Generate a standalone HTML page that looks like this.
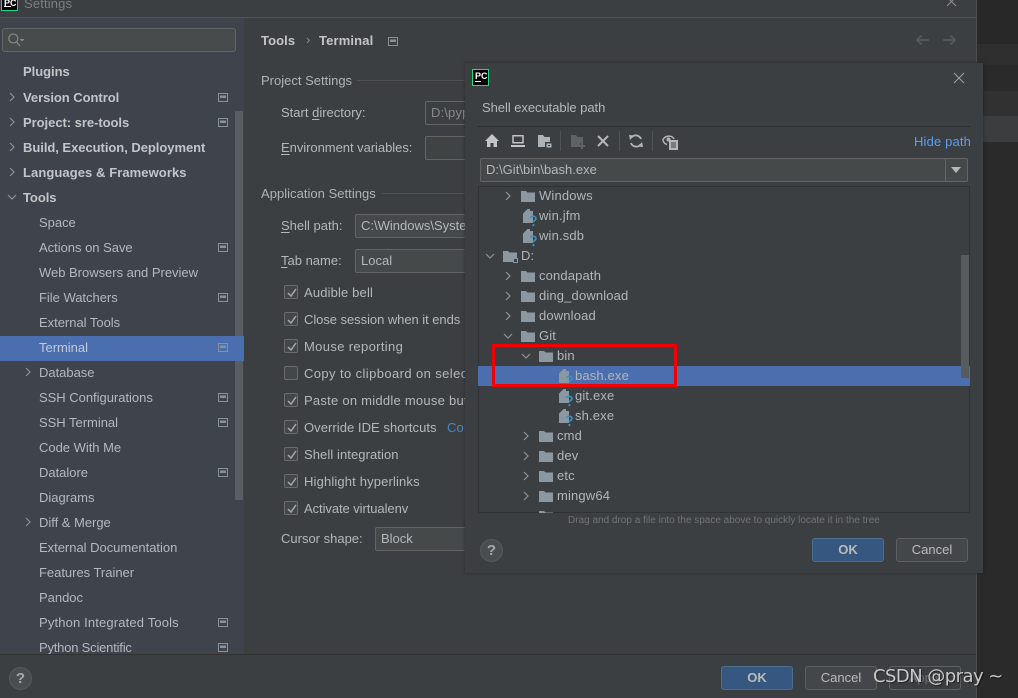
<!DOCTYPE html>
<html><head><meta charset="utf-8"><style>
html,body{margin:0;padding:0;background:#2b2b2b}
body{width:1018px;height:698px;overflow:hidden;position:relative;font-family:"Liberation Sans","Noto Sans CJK SC",sans-serif;font-size:13px;color:#bbbbbb}
div,span.t,svg{position:absolute}
.t{position:absolute;white-space:nowrap;line-height:20px;height:20px;letter-spacing:.15px}
.b{font-weight:bold;color:#c3c5c7;letter-spacing:-.04px}
.s{color:#b5b9bd;letter-spacing:-.02px}
.c{color:#b5b8ba;letter-spacing:0}
u{text-underline-offset:2px}
.inp{background:#45494a;border:1px solid #646464;box-sizing:border-box;border-radius:2px}
.btn{box-sizing:border-box;border:1px solid #5e6060;background:#444749;border-radius:3px;text-align:center;line-height:22px;color:#bbb}
.ok{background:#365880;border-color:#4c708c;color:#bbbbbb;font-weight:bold}
.cb{width:14px;height:14px;box-sizing:border-box;background:#43474a;border:1px solid #6b6b6b;border-radius:2px}
.cb svg{left:1px;top:1px}
.sep{height:1px;background:#515151}
.tn{color:#b3b6b9}
</style></head><body>
<svg width="0" height="0" style="position:absolute"><defs>
<symbol id="gb" viewBox="0 0 10 9"><path d="M.5.5h9v8h-9z" fill="none" stroke="#8a9299"/><path d="M2 2.500h6v2.500H2z" fill="#8a9299"/></symbol>
<symbol id="ar" viewBox="0 0 10 10"><path d="M3 1l4 4-4 4" fill="none" stroke="#8f9294" stroke-width="1.200"/></symbol>
<symbol id="ad" viewBox="0 0 10 10"><path d="M1 3l4 4 4-4" fill="none" stroke="#8f9294" stroke-width="1.200"/></symbol>
<symbol id="fo" viewBox="0 0 14 12"><path d="M0 1h5l1.500 1.500H14V12H0z" fill="#8b98a2"/></symbol>
<symbol id="fi" viewBox="0 0 14 18"><path d="M4.500 0H7v2h3v12H0V4.500z" fill="#8b98a2"/><path d="M7.400 9c.3-2.300 5.600-2.300 5.600.5 0 2-2.600 1.700-2.600 3.800" fill="none" stroke="#3592c4" stroke-width="1.700"/><rect x="9.500" y="15" width="1.800" height="2.200" fill="#3592c4"/></symbol>
</defs></svg>

<!-- right background bands -->
<div style="left:977px;top:0;width:41px;height:44px;background:#282828"></div>
<div style="left:977px;top:44px;width:41px;height:21px;background:#2f2f2f"></div>
<div style="left:977px;top:65px;width:41px;height:26px;background:#2a2a2a"></div>
<div style="left:977px;top:91px;width:41px;height:25px;background:#313131"></div>
<div style="left:977px;top:116px;width:41px;height:26px;background:#3b3d3f"></div>
<div style="left:977px;top:142px;width:41px;height:556px;background:#2a2a2a"></div>

<!-- settings window -->
<div style="left:0;top:0;width:977px;height:698px;background:#3c3f41;border-right:1px solid #4a4c4e;box-sizing:border-box"></div>
<div style="left:0;top:17px;width:976px;height:1px;background:#515355"></div>
<div style="left:1px;top:-6px;width:15px;height:15px;background:#000;border:1px solid #21d789"></div>
<span class="t" style="left:4px;top:-7px;color:#fff;font-weight:bold;font-size:9px;letter-spacing:0">PC</span>
<div style="left:4px;top:6px;width:7px;height:1px;background:#fff"></div>
<span class="t" style="left:24px;top:-6px;color:#7b7e80;font-size:13px">Settings</span>
<svg style="left:946px;top:-4px" width="12" height="12"><path d="M1 1l9 9M10 1l-9 9" stroke="#8f8f8f"/></svg>

<!-- sidebar -->
<div style="left:0;top:18px;width:244px;height:636px;background:#3e434c"></div>
<div class="inp" style="left:2px;top:28px;width:234px;height:24px;background:#474b4c;border-color:#606467;border-radius:3px"></div>
<svg style="left:8px;top:33px" width="20" height="14"><circle cx="5.300" cy="5.500" r="4.500" fill="none" stroke="#8b8e90" stroke-width="1.100"/><path d="M8.500 9l3.500 4" stroke="#8b8e90" stroke-width="1.200"/><path d="M11.500 6h5l-2.500 2.500z" fill="#8b8e90"/></svg>
<div style="left:235px;top:111px;width:8px;height:389px;background:#5a5d63"></div>
<div style="left:0;top:336px;width:244px;height:25px;background:#4b6eaf"></div>

<span class="t b" style="left:23px;top:62px">Plugins</span>
<span class="t b" style="left:23px;top:88px">Version Control</span>
<span class="t b" style="left:23px;top:113px">Project: sre-tools</span>
<span class="t b" style="left:23px;top:138px">Build, Execution, Deployment</span>
<span class="t b" style="left:23px;top:163px;letter-spacing:.08px">Languages &amp; Frameworks</span>
<span class="t b" style="left:23px;top:188px">Tools</span>
<span class="t s" style="left:39px;top:213px">Space</span>
<span class="t s" style="left:39px;top:238px">Actions on Save</span>
<span class="t s" style="left:39px;top:263px">Web Browsers and Preview</span>
<span class="t s" style="left:39px;top:288px">File Watchers</span>
<span class="t s" style="left:39px;top:313px">External Tools</span>
<span class="t s" style="left:39px;top:338px;color:#c4cad6">Terminal</span>
<span class="t s" style="left:39px;top:363px">Database</span>
<span class="t s" style="left:39px;top:388px">SSH Configurations</span>
<span class="t s" style="left:39px;top:413px">SSH Terminal</span>
<span class="t s" style="left:39px;top:438px">Code With Me</span>
<span class="t s" style="left:39px;top:463px">Datalore</span>
<span class="t s" style="left:39px;top:488px">Diagrams</span>
<span class="t s" style="left:39px;top:513px">Diff &amp; Merge</span>
<span class="t s" style="left:39px;top:538px">External Documentation</span>
<span class="t s" style="left:39px;top:563px">Features Trainer</span>
<span class="t s" style="left:39px;top:588px">Pandoc</span>
<span class="t s" style="left:39px;top:613px;letter-spacing:.15px">Python Integrated Tools</span>
<span class="t s" style="left:39px;top:638px;letter-spacing:-.2px">Python Scientific</span>

<svg style="left:7px;top:92px" width="10" height="10"><use href="#ar"/></svg>
<svg style="left:7px;top:117px" width="10" height="10"><use href="#ar"/></svg>
<svg style="left:7px;top:142px" width="10" height="10"><use href="#ar"/></svg>
<svg style="left:7px;top:167px" width="10" height="10"><use href="#ar"/></svg>
<svg style="left:7px;top:192px" width="10" height="10"><use href="#ad"/></svg>
<svg style="left:23px;top:367px" width="10" height="10"><use href="#ar"/></svg>
<svg style="left:23px;top:517px" width="10" height="10"><use href="#ar"/></svg>

<svg style="left:218px;top:93px" width="10" height="9"><use href="#gb"/></svg>
<svg style="left:218px;top:118px" width="10" height="9"><use href="#gb"/></svg>
<svg style="left:218px;top:243px" width="10" height="9"><use href="#gb"/></svg>
<svg style="left:218px;top:293px" width="10" height="9"><use href="#gb"/></svg>
<svg style="left:218px;top:343px" width="10" height="9"><use href="#gb"/></svg>
<svg style="left:218px;top:393px" width="10" height="9"><use href="#gb"/></svg>
<svg style="left:218px;top:418px" width="10" height="9"><use href="#gb"/></svg>
<svg style="left:218px;top:468px" width="10" height="9"><use href="#gb"/></svg>
<svg style="left:218px;top:618px" width="10" height="9"><use href="#gb"/></svg>
<svg style="left:218px;top:643px" width="10" height="9"><use href="#gb"/></svg>

<!-- content -->
<span class="t b" style="left:261px;top:31px;letter-spacing:.1px">Tools</span>
<span class="t" style="left:306px;top:30px;color:#8a8d8f">›</span>
<span class="t b" style="left:319px;top:31px;letter-spacing:.15px">Terminal</span>
<svg style="left:388px;top:37px" width="10" height="9"><use href="#gb"/></svg>
<svg style="left:915px;top:34px" width="15" height="12"><path d="M14 6H2M6.500 1.500L2 6l4.500 4.500" fill="none" stroke="#5a5d5f" stroke-width="1.500"/></svg>
<svg style="left:942px;top:34px" width="15" height="12"><path d="M1 6h12M8.500 1.500L13 6l-4.500 4.500" fill="none" stroke="#5a5d5f" stroke-width="1.500"/></svg>

<span class="t c" style="left:261px;top:71px;color:#b0b3b5">Project Settings</span>
<div class="sep" style="left:357px;top:80px;width:108px"></div>
<span class="t c" style="left:281px;top:103px">Start <u>d</u>irectory:</span>
<div class="inp" style="left:425px;top:101px;width:60px;height:24px;background:#3c3f41"></div>
<span class="t" style="left:431px;top:103px;color:#868a8c">D:\pyp</span>
<span class="t c" style="left:281px;top:138px;letter-spacing:-.04px"><u>E</u>nvironment variables:</span>
<div class="inp" style="left:425px;top:136px;width:60px;height:24px;background:#3f4344"></div>
<span class="t c" style="left:261px;top:184px;color:#b0b3b5;letter-spacing:.03px">Application Settings</span>
<div class="sep" style="left:382px;top:193px;width:83px"></div>
<span class="t c" style="left:281px;top:216px"><u>S</u>hell path:</span>
<div class="inp" style="left:355px;top:214px;width:130px;height:24px"></div>
<span class="t c" style="left:361px;top:216px;width:104px;overflow:hidden">C:\Windows\Syste</span>
<span class="t c" style="left:281px;top:251px"><u>T</u>ab name:</span>
<div class="inp" style="left:355px;top:249px;width:130px;height:24px"></div>
<span class="t c" style="left:361px;top:251px">Local</span>

<div class="cb" style="left:284px;top:285px"><svg width="12" height="12"><path d="M2 6l3 3 5-7" fill="none" stroke="#a5a8aa" stroke-width="1.500"/></svg></div>
<span class="t" style="left:304px;top:283px;color:#b5b8ba">Audible bell</span>
<div class="cb" style="left:284px;top:312px"><svg width="12" height="12"><path d="M2 6l3 3 5-7" fill="none" stroke="#a5a8aa" stroke-width="1.500"/></svg></div>
<span class="t c" style="left:304px;top:310px;letter-spacing:-.05px">Close session when it ends</span>
<div class="cb" style="left:284px;top:339px"><svg width="12" height="12"><path d="M2 6l3 3 5-7" fill="none" stroke="#a5a8aa" stroke-width="1.500"/></svg></div>
<span class="t c" style="left:304px;top:337px;letter-spacing:.35px">Mouse reporting</span>
<div class="cb" style="left:284px;top:366px"></div>
<span class="t c" style="left:304px;top:364px;width:161px;overflow:hidden;letter-spacing:.4px">Copy to clipboard on selection</span>
<div class="cb" style="left:284px;top:393px"><svg width="12" height="12"><path d="M2 6l3 3 5-7" fill="none" stroke="#a5a8aa" stroke-width="1.500"/></svg></div>
<span class="t c" style="left:304px;top:391px;width:161px;overflow:hidden;letter-spacing:.25px">Paste on middle mouse button</span>
<div class="cb" style="left:284px;top:420px"><svg width="12" height="12"><path d="M2 6l3 3 5-7" fill="none" stroke="#a5a8aa" stroke-width="1.500"/></svg></div>
<span class="t c" style="left:304px;top:418px;letter-spacing:.05px">Override IDE shortcuts</span>
<span class="t" style="left:447px;top:418px;color:#4a88c7;width:18px;overflow:hidden">Configure</span>
<div class="cb" style="left:284px;top:447px"><svg width="12" height="12"><path d="M2 6l3 3 5-7" fill="none" stroke="#a5a8aa" stroke-width="1.500"/></svg></div>
<span class="t c" style="left:304px;top:445px;letter-spacing:.08px">Shell integration</span>
<div class="cb" style="left:284px;top:474px"><svg width="12" height="12"><path d="M2 6l3 3 5-7" fill="none" stroke="#a5a8aa" stroke-width="1.500"/></svg></div>
<span class="t" style="left:304px;top:472px;color:#b5b8ba">Highlight hyperlinks</span>
<div class="cb" style="left:284px;top:501px"><svg width="12" height="12"><path d="M2 6l3 3 5-7" fill="none" stroke="#a5a8aa" stroke-width="1.500"/></svg></div>
<span class="t c" style="left:304px;top:499px;letter-spacing:-.07px">Activate virtualenv</span>
<span class="t c" style="left:281px;top:529px;letter-spacing:0">Cursor shape:</span>
<div class="inp" style="left:375px;top:527px;width:110px;height:24px"></div>
<span class="t c" style="left:381px;top:529px">Block</span>

<!-- footer -->
<div style="left:0;top:654px;width:976px;height:1px;background:#323232"></div>
<div style="left:9px;top:667px;width:23px;height:23px;box-sizing:border-box;border-radius:50%;background:#4a4d4f;border:1px solid #56595b;text-align:center;line-height:21px;font-weight:bold;font-size:15px;color:#a5a8aa">?</div>
<div class="btn ok" style="left:721px;top:666px;width:72px;height:24px">OK</div>
<div class="btn" style="left:805px;top:666px;width:72px;height:24px">Cancel</div>
<div class="btn" style="left:889px;top:666px;width:72px;height:24px;background:#3c3f41;color:#6e7072">Apply</div>

<!-- dialog -->
<div style="left:465px;top:63px;width:518px;height:510px;background:#3c3f41;box-shadow:0 0 3px rgba(30,30,30,.7)"></div>
<div style="left:472px;top:69px;width:15px;height:15px;background:#000;border:1px solid #21d789"></div>
<span class="t" style="left:475px;top:66px;color:#fff;font-weight:bold;font-size:9px;letter-spacing:0">PC</span>
<div style="left:475px;top:81px;width:6px;height:1px;background:#fff"></div>
<svg style="left:953px;top:72px" width="12" height="12"><path d="M1 1l10 10M11 1L1 11" stroke="#a0a2a4"/></svg>
<span class="t c" style="left:482px;top:98px;letter-spacing:-.05px">Shell executable path</span>
<div style="left:477px;top:126px;width:494px;height:1px;background:#2e3032"></div>

<!-- toolbar -->
<svg style="left:485px;top:134px" width="14" height="13"><path d="M7 0L0 7h2v6h3.500V9h3v4H12V7h2z" fill="#c2c4c6"/></svg>
<svg style="left:511px;top:135px" width="14" height="12"><path d="M2 .8h10v7H2z" fill="none" stroke="#c2c4c6" stroke-width="1.500"/><path d="M0 10h14v2H0z" fill="#c2c4c6"/></svg>
<svg style="left:538px;top:135px" width="14" height="13"><path d="M0 0h5l1.500 2H12v5H7v5H0z" fill="#aeb3b7"/><path d="M8.500 8.500h5v4h-5z" fill="#aeb3b7"/><path d="M10 10h2v1h-2z" fill="#3c3f41"/></svg>
<div style="left:560px;top:131px;width:1px;height:20px;background:#515355"></div>
<svg style="left:571px;top:135px" width="16" height="14"><path d="M0 0h5l1.500 2H12v6H9v4H0z" fill="#606365"/><path d="M11 8v6M8 11h6" stroke="#606365" stroke-width="2"/></svg>
<svg style="left:597px;top:135px" width="12" height="12"><path d="M1 1l10 10M11 1L1 11" stroke="#b4b6b8" stroke-width="2"/></svg>
<div style="left:619px;top:131px;width:1px;height:20px;background:#515355"></div>
<svg style="left:629px;top:134px" width="14" height="14"><path d="M12 5A5.500 5.500 0 0 0 2.500 3.500M2 9a5.500 5.500 0 0 0 9.500 1.500" fill="none" stroke="#b4b6b8" stroke-width="1.800"/><path d="M0 1l5 .5L1 6zM14 13l-5-.5L13 8z" fill="#b4b6b8"/></svg>
<div style="left:652px;top:131px;width:1px;height:20px;background:#515355"></div>
<svg style="left:662px;top:134px" width="16" height="16"><path d="M.8 6C3 1 10 1 12 5" fill="none" stroke="#b4b6b8" stroke-width="1.500"/><path d="M.8 6C1.500 8 3 10 5 10.500" fill="none" stroke="#b4b6b8" stroke-width="1.500"/><circle cx="6.500" cy="5.500" r="2" fill="#b4b6b8"/><path d="M7 6h9v10H7z" fill="#b4b6b8"/><path d="M9 9h5M9 11h5M9 13h5" stroke="#3c3f41"/></svg>
<span class="t" style="left:914px;top:132px;color:#589df6">Hide path</span>

<!-- path field -->
<div class="inp" style="left:480px;top:158px;width:488px;height:24px;background:#45494a;border-color:#646464"></div>
<div style="left:945px;top:159px;width:1px;height:22px;background:#646464"></div>
<div style="left:951px;top:167px;width:0;height:0;border-left:5px solid transparent;border-right:5px solid transparent;border-top:6px solid #b4b6b8"></div>
<span class="t c" style="left:486px;top:160px;letter-spacing:.02px">D:\Git\bin\bash.exe</span>

<!-- tree -->
<div style="left:478px;top:186px;width:492px;height:327px;box-sizing:border-box;border:1px solid #303234;background:#3c3f41"></div>
<div style="left:478px;top:366px;width:492px;height:20px;background:#4b6eaf"></div>
<div style="left:961px;top:255px;width:8px;height:123px;background:#585b5d"></div>

<svg style="left:503px;top:191px" width="10" height="10"><use href="#ar"/></svg>
<svg style="left:521px;top:190px" width="14" height="12"><use href="#fo"/></svg>
<span class="t tn" style="left:539px;top:186px">Windows</span>
<svg style="left:523px;top:209px" width="14" height="18"><use href="#fi"/></svg>
<span class="t tn" style="left:539px;top:206px">win.jfm</span>
<svg style="left:523px;top:229px" width="14" height="18"><use href="#fi"/></svg>
<span class="t tn" style="left:539px;top:226px">win.sdb</span>

<svg style="left:485px;top:251px" width="10" height="10"><use href="#ad"/></svg>
<svg style="left:503px;top:250px" width="14" height="12"><use href="#fo"/></svg>
<div style="left:513px;top:258px;width:5px;height:5px;background:#3c3f41;border:1px solid #8b98a2;box-sizing:border-box"></div>
<span class="t tn" style="left:521px;top:246px">D:</span>

<svg style="left:503px;top:271px" width="10" height="10"><use href="#ar"/></svg>
<svg style="left:521px;top:270px" width="14" height="12"><use href="#fo"/></svg>
<span class="t tn" style="left:539px;top:266px">condapath</span>
<svg style="left:503px;top:291px" width="10" height="10"><use href="#ar"/></svg>
<svg style="left:521px;top:290px" width="14" height="12"><use href="#fo"/></svg>
<span class="t tn" style="left:539px;top:286px">ding_download</span>
<svg style="left:503px;top:311px" width="10" height="10"><use href="#ar"/></svg>
<svg style="left:521px;top:310px" width="14" height="12"><use href="#fo"/></svg>
<span class="t tn" style="left:539px;top:306px">download</span>
<svg style="left:503px;top:331px" width="10" height="10"><use href="#ad"/></svg>
<svg style="left:521px;top:330px" width="14" height="12"><use href="#fo"/></svg>
<span class="t tn" style="left:539px;top:326px">Git</span>
<svg style="left:521px;top:351px" width="10" height="10"><use href="#ad"/></svg>
<svg style="left:539px;top:350px" width="14" height="12"><use href="#fo"/></svg>
<span class="t tn" style="left:557px;top:346px">bin</span>
<svg style="left:559px;top:369px" width="14" height="18"><use href="#fi"/></svg>
<span class="t tn" style="left:575px;top:366px">bash.exe</span>
<svg style="left:559px;top:389px" width="14" height="18"><use href="#fi"/></svg>
<span class="t tn" style="left:575px;top:386px">git.exe</span>
<svg style="left:559px;top:409px" width="14" height="18"><use href="#fi"/></svg>
<span class="t tn" style="left:575px;top:406px">sh.exe</span>
<svg style="left:521px;top:431px" width="10" height="10"><use href="#ar"/></svg>
<svg style="left:539px;top:430px" width="14" height="12"><use href="#fo"/></svg>
<span class="t tn" style="left:557px;top:426px">cmd</span>
<svg style="left:521px;top:451px" width="10" height="10"><use href="#ar"/></svg>
<svg style="left:539px;top:450px" width="14" height="12"><use href="#fo"/></svg>
<span class="t tn" style="left:557px;top:446px">dev</span>
<svg style="left:521px;top:471px" width="10" height="10"><use href="#ar"/></svg>
<svg style="left:539px;top:470px" width="14" height="12"><use href="#fo"/></svg>
<span class="t tn" style="left:557px;top:466px">etc</span>
<svg style="left:521px;top:491px" width="10" height="10"><use href="#ar"/></svg>
<svg style="left:539px;top:490px" width="14" height="12"><use href="#fo"/></svg>
<span class="t tn" style="left:557px;top:486px">mingw64</span>
<div style="left:521px;top:510px;width:60px;height:3px;overflow:hidden"><svg style="left:18px;top:0" width="14" height="12"><use href="#fo"/></svg></div>

<span class="t" style="left:568px;top:511px;color:#6f7375;font-size:10px;letter-spacing:0">Drag and drop a file into the space above to quickly locate it in the tree</span>

<!-- red rect -->
<div style="left:492px;top:344px;width:185px;height:43px;box-sizing:border-box;border:3px solid #f00000"></div>

<div style="left:480px;top:539px;width:23px;height:23px;box-sizing:border-box;border-radius:50%;background:#4a4d4f;border:1px solid #56595b;text-align:center;line-height:21px;font-weight:bold;font-size:15px;color:#a5a8aa">?</div>
<div class="btn ok" style="left:812px;top:538px;width:72px;height:24px">OK</div>
<div class="btn" style="left:896px;top:538px;width:72px;height:24px">Cancel</div>

<!-- watermark -->
<span class="t" style="left:873px;top:667px;font-family:'DejaVu Sans',sans-serif;font-size:18px;letter-spacing:-.55px;color:#c8c8c8;text-shadow:1px 1px 1px rgba(0,0,0,.5)">CSDN @pray ~</span>
</body></html>
